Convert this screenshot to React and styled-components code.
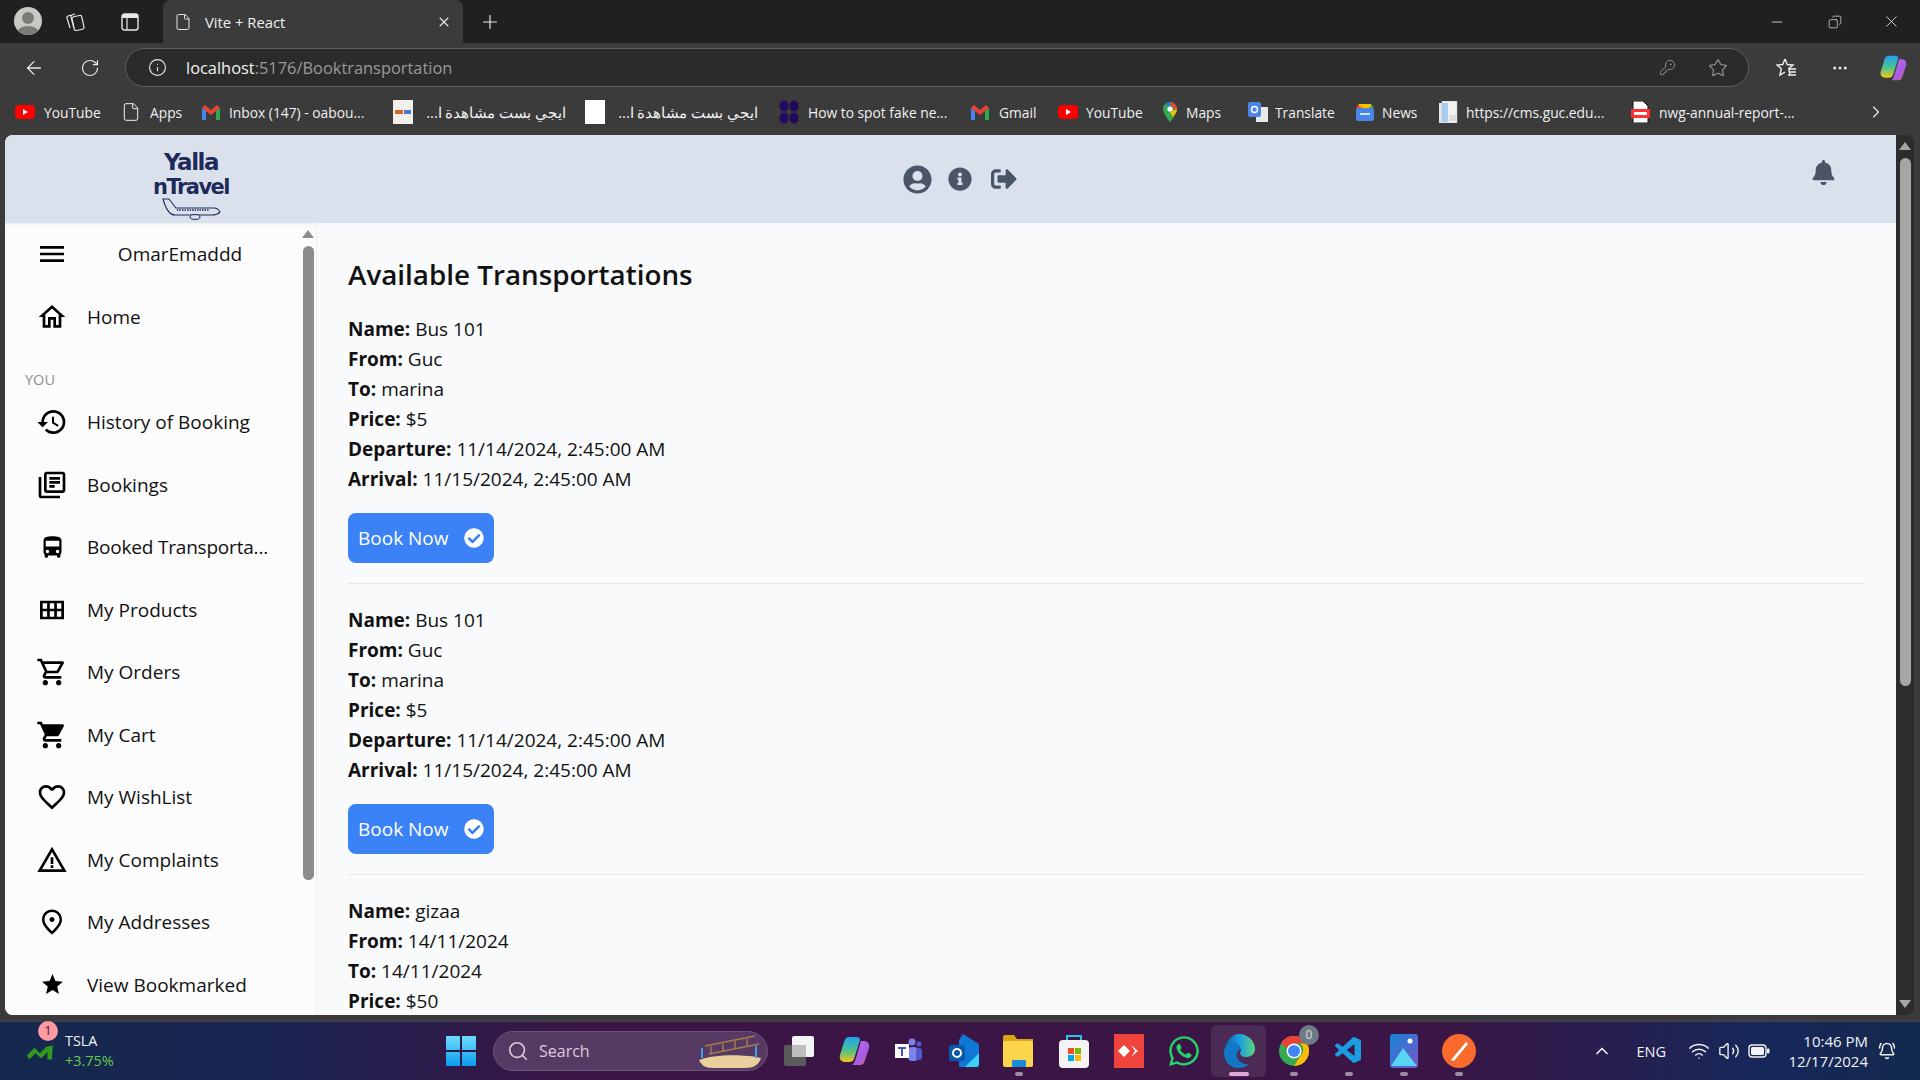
import React from 'react'
import styled, { createGlobalStyle } from 'styled-components'
import {
  ArrowLeft, RotateCw, Info, KeyRound, Star, ChevronRight, ChevronUp, File, X, Plus, Minus, Copy,
  MoreHorizontal, Wifi, Volume2, Search, BellRing,
} from 'lucide-react'
import {
  MdMenu, MdOutlineHome, MdHistory, MdOutlineLibraryBooks, MdDirectionsBus, MdOutlineViewModule,
  MdOutlineShoppingCart, MdShoppingCart, MdFavoriteBorder, MdWarningAmber, MdOutlinePlace, MdStar,
} from 'react-icons/md'
import { FaUserCircle, FaInfoCircle, FaSignOutAlt, FaBell, FaCheckCircle, FaWhatsapp } from 'react-icons/fa'
import { VscVscode } from 'react-icons/vsc'

const FONT = '"Open Sans", "Noto Sans", sans-serif'

const GlobalStyle = createGlobalStyle`
  html, body { margin: 0; padding: 0; background: #3b3b3b; overflow: hidden; }
  * { box-sizing: border-box; }
`

const Screen = styled.div`
  width: 1920px;
  height: 1080px;
  display: flex;
  flex-direction: column;
  overflow: hidden;
  font-family: ${FONT};
  background: #3b3b3b;
`

/* ---------- browser chrome ---------- */
const TabStrip = styled.div`
  height: 43px;
  flex: none;
  background: #202020;
  display: flex;
  align-items: stretch;
  color: #e8e8e8;
  padding-left: 14px;
`
const Avatar = styled.div`
  width: 28px;
  height: 28px;
  margin-top: 7px;
  border-radius: 50%;
  background: #c9c8c4;
  overflow: hidden;
  flex: none;
`
const StripIcon = styled.div`
  width: ${p => p.$w}px;
  display: flex;
  align-items: center;
  justify-content: center;
  flex: none;
`
const Tab = styled.div`
  width: 300px;
  margin-left: 11px;
  background: #3b3b3b;
  border-radius: 8px 8px 0 0;
  display: flex;
  align-items: center;
  padding: 0 11px 0 11px;
  font-size: 14.8px;
  gap: 13px;
  flex: none;
  span { flex: 1; color: #f0f0f0; }
`
const WindowControls = styled.div`
  margin-left: auto;
  display: flex;
  align-items: center;
  padding-right: 1px;
`
const Toolbar = styled.div`
  height: 47px;
  flex: none;
  display: flex;
  align-items: center;
  padding-top: 2px;
  color: #e8e8e8;
`
const NavButton = styled.div`
  width: ${p => p.$w}px;
  margin-left: ${p => p.$ml || 0}px;
  display: flex;
  justify-content: center;
  flex: none;
`
const UrlBar = styled.div`
  width: 1624px;
  height: 39px;
  flex: none;
  margin-left: 14px;
  border: 1px solid #5e5e5e;
  border-radius: 20px;
  background: #2b2b2b;
  display: flex;
  align-items: center;
  padding: 0 20px 0 22px;
  font-size: 16.4px;
  color: #9a9a9a;
  b { font-weight: 400; color: #f2f2f2; }
`
const UrlText = styled.div`
  margin-left: 19px;
  flex: 1;
`
const Bookmarks = styled.div`
  height: 45px;
  flex: none;
  display: flex;
  align-items: center;
  padding: 0 0 1px 15px;
  color: #f0f0f0;
  font-size: 13.8px;
`
const Bookmark = styled.div`
  width: ${p => p.$w}px;
  flex: none;
  display: flex;
  align-items: center;
  gap: ${p => p.$gap || 9}px;
  white-space: nowrap;
`
const RtlLabel = styled.span`
  direction: rtl;
  width: 140px;
  font-size: 14.5px;
`

/* ---------- page ---------- */
const Viewport = styled.div`
  flex: none;
  height: 886px;
  padding-left: 5px;
  padding-right: 6px;
  display: flex;
`
const Page = styled.div`
  width: 1891px;
  height: 880px;
  display: flex;
  flex-direction: column;
  background: #f9fafb;
  border-radius: 8px 0 0 8px;
  overflow: hidden;
  flex: none;
`
const WindowScroll = styled.div`
  width: 18px;
  height: 880px;
  flex: none;
  background: #2c2c2c;
  border-radius: 0 8px 8px 0;
  display: flex;
  flex-direction: column;
  align-items: center;
  padding: 7px 0;
`
const Arrow = styled.div`
  width: 0;
  height: 0;
  flex: none;
  border-left: 6px solid transparent;
  border-right: 6px solid transparent;
  ${p => p.$down ? `border-top: 8px solid ${p.$c}; margin-top: auto;` : `border-bottom: 8px solid ${p.$c};`}
`
const WindowThumb = styled.div`
  width: 11px;
  height: 528px;
  margin-top: 8px;
  border-radius: 6px;
  background: #a6a6a6;
  flex: none;
`
const Header = styled.header`
  height: 88px;
  flex: none;
  background: #dbe1ec;
  display: flex;
  align-items: center;
`
const Logo = styled.div`
  width: 372px;
  display: flex;
  flex-direction: column;
  align-items: center;
  color: #1f2a5c;
  font-family: "DejaVu Sans", sans-serif;
  font-weight: 700;
  line-height: 25px;
  padding-top: 11px;
  flex: none;
`
const LogoLine = styled.div`
  font-size: ${p => p.$s}px;
  letter-spacing: -1.5px;
  height: ${p => p.$h}px;
`
const HeaderIcons = styled.div`
  width: 1095px;
  padding-left: 526px;
  flex: none;
  display: flex;
  align-items: center;
  gap: 16px;
  color: #4a5568;
  svg:last-child { margin-left: 3px; }
`
const BellWrap = styled.div`
  margin-left: 339px;
  margin-top: -14px;
  color: #4a5568;
  display: flex;
`
const Body = styled.div`
  flex: 1;
  min-height: 0;
  display: flex;
`
const Sidebar = styled.aside`
  width: 312px;
  flex: none;
  display: flex;
  background: #fcfcfc;
  border-right: 1px solid #eeeff1;
  box-shadow: inset 0 6px 6px -6px #e4e6ea;
`
const SideList = styled.nav`
  width: 295px;
  flex: none;
  overflow: hidden;
`
const SideRow = styled.div`
  height: 62.5px;
  display: flex;
  align-items: center;
  padding-left: 31px;
  font-size: 19px;
  color: #111;
  white-space: nowrap;
`
const SideLabel = styled.span`
  letter-spacing: ${p => p.$tight ? '-0.2px' : '0'};
`
const SideIcon = styled.div`
  width: 32px;
  margin-right: 19px;
  display: flex;
  justify-content: center;
  color: #000;
  flex: none;
`
const UserName = styled.div`
  width: 160px;
  margin-left: 13px;
  text-align: center;
`
const SectionLabel = styled.div`
  height: 43px;
  padding: 22px 0 0 20px;
  font-size: 14.5px;
  line-height: 20px;
  color: #8f8f8f;
`
const SideScroll = styled.div`
  width: 16px;
  flex: none;
  display: flex;
  flex-direction: column;
  align-items: center;
  padding-top: 7px;
`
const SideThumb = styled.div`
  width: 11px;
  height: 634px;
  margin-top: 8px;
  border-radius: 6px;
  background: #8c8c8c;
  flex: none;
`
const Main = styled.main`
  flex: 1;
  min-width: 0;
  overflow: hidden;
  padding: 33px 31px 0 31px;
`
const Title = styled.h1`
  margin: 0 0 22px;
  font-size: 27.8px;
  line-height: 36px;
  font-weight: 600;
  color: #111;
`
const Card = styled.section`
  padding-bottom: 20px;
  margin-bottom: 21px;
  border-bottom: 1px solid #e5e7eb;
`
const LastCard = styled.section``
const Line = styled.div`
  height: 30px;
  line-height: 30px;
  font-size: 19px;
  color: #111;
  b { font-weight: 700; }
`
const BookButton = styled.button`
  margin-top: 19px;
  width: 146px;
  height: 50px;
  border: 0;
  border-radius: 8px;
  background: #3b82f6;
  color: #fff;
  font-family: ${FONT};
  font-size: 19px;
  display: flex;
  align-items: center;
  justify-content: space-between;
  padding: 0 10px;
`

/* ---------- taskbar ---------- */
const Taskbar = styled.footer`
  height: 59px;
  flex: none;
  display: flex;
  align-items: center;
  color: #f2f2f2;
  background: linear-gradient(90deg, #14294d 0%, #1a2452 14%, #3a1545 30%, #3a1545 75%, #16285a 92%, #14294d 100%);
  border-top: 1px solid #46405a;
`
const Ticker = styled.div`
  width: 446px;
  flex: none;
  display: flex;
  align-items: center;
  padding-left: 27px;
  position: relative;
`
const TickerBadge = styled.div`
  position: absolute;
  left: 38px;
  top: -10px;
  width: 20px;
  height: 20px;
  border-radius: 50%;
  background: #ff9aa2;
  color: #3a1020;
  font-size: 12px;
  text-align: center;
  line-height: 20px;
`
const TickerText = styled.div`
  margin-left: 10px;
  font-size: 14.4px;
  line-height: 20px;
  em { display: block; font-style: normal; color: #6bc950; }
`
const SearchBox = styled.div`
  width: 275px;
  height: 40px;
  flex: none;
  margin-left: 17px;
  border-radius: 20px;
  background: #573a63;
  border: 1px solid #6b5077;
  display: flex;
  align-items: center;
  padding: 0 6px 0 13px;
  gap: 10px;
  font-size: 16px;
  color: #d8ccdc;
  span { flex: 1; }
`
const TrayApps = styled.div`
  display: flex;
  flex: none;
  margin-left: 3px;
`
const AppSlot = styled.div`
  width: 55px;
  height: 52px;
  display: flex;
  align-items: center;
  justify-content: center;
  position: relative;
  border-radius: 6px;
  background: ${p => p.$active ? '#4b2a55' : 'transparent'};
  &::after {
    content: '';
    display: ${p => p.$dot ? 'block' : 'none'};
    position: absolute;
    bottom: 1px;
    left: 50%;
    transform: translateX(-50%);
    width: ${p => p.$active ? 20 : 8}px;
    height: 4px;
    border-radius: 2px;
    background: ${p => p.$active ? '#e3a8d8' : '#9a8da0'};
  }
`
const AppBadge = styled.div`
  position: absolute;
  right: 2px;
  top: 0;
  width: 20px;
  height: 20px;
  border-radius: 50%;
  background: #6d7b85;
  color: #d8dde0;
  font-size: 12px;
  text-align: center;
  line-height: 20px;
`
const Tray = styled.div`
  margin-left: auto;
  display: flex;
  align-items: center;
  padding-right: 24px;
`
const Lang = styled.div`
  font-size: 14.5px;
  margin: 0 22px 0 24px;
`
const Clock = styled.div`
  width: 98px;
  text-align: right;
  font-size: 15px;
  line-height: 20px;
`

/* ---------- drawn icons ---------- */
const YouTubeIcon = () => (
  <svg width="20" height="14" viewBox="0 0 20 14"><rect width="20" height="14" rx="4" fill="#f00" /><path d="M8 4l5 3-5 3z" fill="#fff" /></svg>
)
const GmailIcon = () => (
  <svg width="18" height="15" viewBox="0 0 18 15">
    <path d="M0 3v12h4V6z" fill="#4285f4" /><path d="M18 3v12h-4V6z" fill="#34a853" />
    <path d="M0 3l3-3 6 5 6-5 3 3-9 7z" fill="#ea4335" />
  </svg>
)
const MapsIcon = () => (
  <svg width="14" height="20" viewBox="0 0 14 20">
    <path d="M7 0a7 7 0 0 1 7 7c0 5-7 13-7 13S0 12 0 7a7 7 0 0 1 7-7z" fill="#34a853" />
    <path d="M2 2a7 7 0 0 1 5-2v4z" fill="#1a73e8" /><path d="M7 0a7 7 0 0 1 7 7H10z" fill="#ea4335" />
    <path d="M14 7c0 2-2 5-4 8L7 10z" fill="#fbbc04" /><circle cx="7" cy="7" r="2.6" fill="#fff" />
  </svg>
)
const TranslateIcon = () => (
  <svg width="20" height="20" viewBox="0 0 20 20">
    <rect x="8" y="5" width="12" height="15" fill="#e8e8e8" /><rect width="13" height="15" rx="2" fill="#4a86e8" />
    <circle cx="6.5" cy="7.5" r="3" fill="none" stroke="#fff" strokeWidth="1.4" />
  </svg>
)
const NewsIcon = () => (
  <svg width="20" height="20" viewBox="0 0 20 20">
    <path d="M4 2h12l2 4H2z" fill="#fbbc04" /><path d="M3 3l4 3H1z" fill="#ea4335" /><path d="M17 3l2 3h-5z" fill="#34a853" />
    <rect x="1" y="6" width="18" height="13" rx="2" fill="#4a86e8" /><rect x="5" y="11" width="10" height="2" fill="#cfe0fb" />
  </svg>
)
const DocIcon = () => (
  <svg width="20" height="22" viewBox="0 0 20 22">
    <rect x="0" y="2" width="8" height="20" fill="#dfe8f2" /><rect x="3" y="0" width="15" height="22" fill="#f2f2f2" stroke="#bbb" strokeWidth=".6" />
    <rect x="3" y="2" width="6" height="19" fill="#a9cbee" /><rect x="10" y="14" width="7" height="6" fill="#ddd" />
  </svg>
)
const PdfIcon = () => (
  <svg width="19" height="22" viewBox="0 0 19 22">
    <path d="M2 0h10l5 5v17H2z" fill="#fff" stroke="#111" strokeWidth="1" />
    <rect x="0" y="8" width="19" height="9" fill="#f33" /><rect x="3" y="11" width="13" height="3" fill="#fff" />
  </svg>
)
const DotsLogo = () => (
  <svg width="20" height="24" viewBox="0 0 20 24" fill="#1f0a5e">
    <ellipse cx="5" cy="6" rx="4.6" ry="5.6" /><ellipse cx="15" cy="6" rx="4.6" ry="5.6" />
    <ellipse cx="5" cy="18" rx="4.6" ry="5.6" /><ellipse cx="15" cy="18" rx="4.6" ry="5.6" />
  </svg>
)
const EgyIcon = () => (
  <svg width="20" height="24" viewBox="0 0 20 24"><rect width="20" height="24" fill="#f1efe9" /><rect x="2" y="10" width="8" height="4" fill="#d8622a" /><rect x="11" y="10" width="7" height="4" fill="#4a78c8" /></svg>
)
const WhiteTile = () => <svg width="20" height="24"><rect width="20" height="24" fill="#fff" /></svg>
const CopilotIcon = ({ size = 32, id = 'cp' }) => (
  <svg width={size} height={size} viewBox="0 0 32 32">
    <defs>
      <linearGradient id={`${id}1`} x1="0" y1="0" x2="0" y2="1"><stop offset="0" stopColor="#1fa2f2" /><stop offset=".55" stopColor="#4cc38a" /><stop offset="1" stopColor="#f5c518" /></linearGradient>
      <linearGradient id={`${id}2`} x1="0" y1="0" x2="1" y2="1"><stop offset="0" stopColor="#c76be0" /><stop offset=".6" stopColor="#a65de8" /><stop offset="1" stopColor="#f0596a" /></linearGradient>
    </defs>
    <path d="M11 2h8c2 0 3 1 3 3l-6 19c-1 2-2 3-5 3H7c-4 0-6-3-5-7l4-13c1-3 2-5 5-5z" fill={`url(#${id}1)`} />
    <path d="M14 30h8c3 0 4-2 5-5l4-12c1-4-1-7-5-7h-3l-6 20c-1 2-2 4-3 4z" fill={`url(#${id}2)`} />
  </svg>
)
const WindowsLogo = () => (
  <svg width="30" height="30" viewBox="0 0 30 30">
    <defs><linearGradient id="win" x1="0" y1="0" x2="0" y2="1"><stop offset="0" stopColor="#6fdcfb" /><stop offset="1" stopColor="#0a9cf0" /></linearGradient></defs>
    <path d="M0 1a1 1 0 0 1 1-1h13v14H0zM16 0h13a1 1 0 0 1 1 1v13H16zM0 16h14v14H1a1 1 0 0 1-1-1zM16 16h14v13a1 1 0 0 1-1 1H16z" fill="url(#win)" />
  </svg>
)
const SearchArt = () => (
  <svg width="62" height="34" viewBox="0 0 62 34">
    <path d="M0 26c14-6 46-6 62-2-2 7-8 10-16 10H14C6 34 2 31 0 26z" fill="#e8cf9b" />
    <path d="M6 12L56 2M10 20L60 10M12 12v8M24 10v8M36 7v8M48 5v8" stroke="#a97c50" strokeWidth="1.4" fill="none" />
    <path d="M3 14v10M57 12v12" stroke="#3f9fe0" strokeWidth="2" />
  </svg>
)
const TaskViewIcon = () => (
  <svg width="30" height="30" viewBox="0 0 30 30">
    <rect y="9" width="22" height="21" rx="2" fill="#5b5b5b" /><rect x="8" y="0" width="22" height="21" rx="2" fill="#f4f4f4" /><rect x="8" y="9" width="14" height="12" fill="#bdbdbd" />
  </svg>
)
const TeamsIcon = () => (
  <svg width="28" height="26" viewBox="0 0 28 26">
    <circle cx="17" cy="4" r="3.5" fill="#7b83eb" /><circle cx="24" cy="6" r="2.6" fill="#5059c9" />
    <rect x="13" y="9" width="10" height="14" rx="4" fill="#7b83eb" /><rect x="21" y="10" width="6" height="12" rx="3" fill="#5059c9" />
    <rect y="6" width="14" height="14" fill="#fff" /><path d="M3 9h8v2H8v7H6v-7H3z" fill="#4b53bc" />
  </svg>
)
const OutlookIcon = () => (
  <svg width="30" height="34" viewBox="0 0 30 34">
    <path d="M14 0l16 10v20a3 3 0 0 1-3 3H10V6z" fill="#0f78d4" /><path d="M16 33l14-14v11a3 3 0 0 1-3 3z" fill="#38d4f5" />
    <rect y="11" width="16" height="16" rx="2" fill="#0a5aab" /><circle cx="8" cy="19" r="4" fill="none" stroke="#fff" strokeWidth="2" />
  </svg>
)
const FolderIcon = () => (
  <svg width="32" height="32" viewBox="0 0 32 32">
    <path d="M0 2a2 2 0 0 1 2-2h9l3 4h16v6H0z" fill="#dba513" /><rect y="6" width="30" height="26" rx="2" fill="#fbd54c" />
    <rect x="9" y="25" width="14" height="7" rx="1" fill="#1b8bd6" />
  </svg>
)
const StoreIcon = () => (
  <svg width="30" height="34" viewBox="0 0 30 34">
    <path d="M8 6V2h14v4" fill="none" stroke="#2dc0ee" strokeWidth="2" /><rect y="6" width="30" height="28" rx="4" fill="#f4f4f4" />
    <rect x="9" y="14" width="6" height="6" fill="#f25022" /><rect x="16" y="14" width="6" height="6" fill="#7fba00" />
    <rect x="9" y="21" width="6" height="6" fill="#00a4ef" /><rect x="16" y="21" width="6" height="6" fill="#ffb900" />
  </svg>
)
const AnyDeskIcon = () => (
  <svg width="30" height="34" viewBox="0 0 30 34">
    <rect width="30" height="34" fill="#ef443b" /><path d="M10 11l6 6-6 6-6-6z" fill="#fff" /><path d="M17 11l7 6-7 6 4-6z" fill="#fff" />
  </svg>
)
const EdgeIcon = () => (
  <svg width="32" height="34" viewBox="0 0 32 34">
    <defs><linearGradient id="edge" x1="0" y1="0" x2="1" y2="0"><stop offset="0" stopColor="#0c59a4" /><stop offset=".5" stopColor="#1b9de2" /><stop offset="1" stopColor="#5ad47a" /></linearGradient></defs>
    <path d="M16 0c9 0 16 7 16 15 0 5-4 8-9 8-4 0-6-2-6-4 0-1 1-2 1-3 0-3-3-5-6-5-6 0-10 5-11 8C2 8 8 0 16 0z" fill="url(#edge)" />
    <path d="M1 19c0-6 5-10 10-10 4 0 7 3 7 6-3 1-5 4-4 8s6 8 12 7c-3 3-7 4-11 4C7 34 1 27 1 19z" fill="#1377c9" />
  </svg>
)
const ChromeIcon = () => (
  <svg width="30" height="30" viewBox="0 0 30 30">
    <circle cx="15" cy="15" r="15" fill="#34a853" /><path d="M15 0a15 15 0 0 1 13 7.5H15a7.5 7.5 0 0 0-7 5L2 7a15 15 0 0 1 13-7z" fill="#ea4335" />
    <path d="M28 7.5A15 15 0 0 1 15 30l7-11a7.5 7.5 0 0 0-1-11.5z" fill="#fbbc04" /><circle cx="15" cy="15" r="7.5" fill="#fff" /><circle cx="15" cy="15" r="6" fill="#4285f4" />
  </svg>
)
const PhotosIcon = () => (
  <svg width="30" height="34" viewBox="0 0 30 34">
    <defs><linearGradient id="ph" x1="0" y1="0" x2="1" y2="1"><stop offset="0" stopColor="#1583d8" /><stop offset="1" stopColor="#7a56c8" /></linearGradient></defs>
    <rect width="28" height="34" x="1" rx="3" fill="url(#ph)" /><circle cx="21" cy="7" r="2.5" fill="#fff" /><path d="M2 32l12-18 14 18z" fill="#58d5f2" />
  </svg>
)
const PenIcon = () => (
  <svg width="34" height="34" viewBox="0 0 34 34">
    <circle cx="17" cy="17" r="17" fill="#f96a2d" /><path d="M9 26L24 8l2 2L12 27z" fill="#fff" />
  </svg>
)
const TickerIcon = () => (
  <svg width="28" height="22" viewBox="0 0 26 20"><path d="M0 14l7-7 5 5 6-6 6-1-1 13h-4v-7l-6 6-5-5-6 6z" fill="#2e9a1f" /></svg>
)
const PlaneIcon = () => (
  <svg width="60" height="22" viewBox="0 0 60 22">
    <path d="M2 1l6 0 7 9h38c3 0 5 2 6 4-2 2-5 3-8 3H14C9 17 5 12 2 1z" fill="#dbe1ec" stroke="#1f2a5c" strokeWidth="1.1" />
    <path d="M16 12h32" stroke="#1f2a5c" strokeWidth="1.6" strokeDasharray="1.5 1" />
    <ellipse cx="34" cy="19" rx="5" ry="2.4" fill="#dbe1ec" stroke="#1f2a5c" />
  </svg>
)
const CollectionsIcon = () => (
  <svg width="20" height="20" viewBox="0 0 20 20" fill="none" stroke="#e8e8e8" strokeWidth="1.2">
    <rect x="8" y="4" width="10" height="14" rx="2" transform="rotate(-12 13 11)" />
    <path d="M6 3l-3 1c-1 .4-1.4 1-1 2l3 10M10 2L7 3c-1 .4-1.4 1-1 2l3 11" />
  </svg>
)
const TabsIcon = () => (
  <svg width="18" height="18" viewBox="0 0 18 18" fill="none">
    <rect x="1" y="1" width="16" height="16" rx="2.5" stroke="#e8e8e8" strokeWidth="1.4" />
    <path d="M1 3.500A2.500 2.500 0 0 1 3.500 1h11A2.500 2.500 0 0 1 17 3.500V5H1z" fill="#e8e8e8" />
    <path d="M6 5v12" stroke="#e8e8e8" strokeWidth="1.2" />
  </svg>
)
const FavoritesIcon = () => (
  <svg width="22" height="22" viewBox="0 0 22 22" fill="none" stroke="#f0f0f0" strokeWidth="1.4">
    <path d="M9 2l2.300 5.500 5.700.5-4.300 3.800 1.300 5.700M9 2L6.700 7.500 1 8l4.300 3.800L4 18l5-3" />
    <path d="M13 12h7M14 15h6M12 18h8" />
  </svg>
)
const BatteryIcon = () => (
  <svg width="22" height="14" viewBox="0 0 22 14">
    <rect x="1" y="1" width="17" height="12" rx="3" fill="none" stroke="#f2f2f2" strokeWidth="1.4" />
    <rect x="3" y="3" width="13" height="8" rx="1.5" fill="#f2f2f2" />
    <rect x="19" y="4.500" width="2.500" height="5" rx="1" fill="#f2f2f2" />
  </svg>
)

const sideItems = [
  [MdHistory, 'History of Booking', 32],
  [MdOutlineLibraryBooks, 'Bookings', 32],
  [MdDirectionsBus, 'Booked Transporta...', 27, true],
  [MdOutlineViewModule, 'My Products', 32],
  [MdOutlineShoppingCart, 'My Orders', 32],
  [MdShoppingCart, 'My Cart', 32],
  [MdFavoriteBorder, 'My WishList', 32],
  [MdWarningAmber, 'My Complaints', 32],
  [MdOutlinePlace, 'My Addresses', 30],
  [MdStar, 'View Bookmarked', 25],
]

const trips = [
  { name: 'Bus 101', from: 'Guc', to: 'marina', price: '$5', dep: '11/14/2024, 2:45:00 AM', arr: '11/15/2024, 2:45:00 AM' },
  { name: 'Bus 101', from: 'Guc', to: 'marina', price: '$5', dep: '11/14/2024, 2:45:00 AM', arr: '11/15/2024, 2:45:00 AM' },
]

const App = () => (
  <Screen>
    <GlobalStyle />
    <TabStrip>
      <Avatar>
        <svg width="28" height="28" viewBox="0 0 28 28" fill="#7c7b78"><circle cx="14" cy="11" r="6" /><ellipse cx="14" cy="26" rx="11" ry="7" /></svg>
      </Avatar>
      <StripIcon $w={66}><CollectionsIcon /></StripIcon>
      <StripIcon $w={44}><TabsIcon /></StripIcon>
      <Tab>
        <File size={18} strokeWidth={1.3} />
        <span>Vite + React</span>
        <X size={16} strokeWidth={1.6} />
      </Tab>
      <StripIcon $w={54}><Plus size={22} strokeWidth={1.3} /></StripIcon>
      <WindowControls>
        <StripIcon $w={60}><Minus size={16} strokeWidth={1.2} /></StripIcon>
        <StripIcon $w={56}><Copy size={14} strokeWidth={1.2} style={{ transform: 'scaleX(-1)' }} /></StripIcon>
        <StripIcon $w={56}><X size={19} strokeWidth={1.1} /></StripIcon>
      </WindowControls>
    </TabStrip>
    <Toolbar>
      <NavButton $w={68}><ArrowLeft size={22} strokeWidth={1.4} /></NavButton>
      <NavButton $w={43}><RotateCw size={20} strokeWidth={1.4} /></NavButton>
      <UrlBar>
        <Info size={19} strokeWidth={1.4} color="#e8e8e8" />
        <UrlText><b>localhost</b>:5176/Booktransportation</UrlText>
        <KeyRound size={17} strokeWidth={1.3} style={{ marginRight: 32 }} />
        <Star size={20} strokeWidth={1.3} />
      </UrlBar>
      <NavButton $w={76}><FavoritesIcon /></NavButton>
      <NavButton $w={29}><MoreHorizontal size={18} /></NavButton>
      <NavButton $w={46} $ml={16}><CopilotIcon size={28} id="cpa" /></NavButton>
    </Toolbar>
    <Bookmarks>
      <Bookmark $w={106}><YouTubeIcon />YouTube</Bookmark>
      <Bookmark $w={81}><File size={20} strokeWidth={1.2} />Apps</Bookmark>
      <Bookmark $w={191}><GmailIcon />Inbox (147) - oabou...</Bookmark>
      <Bookmark $w={192} $gap={13}><EgyIcon /><RtlLabel>ايجي بست مشاهدة ا...</RtlLabel></Bookmark>
      <Bookmark $w={194} $gap={13}><WhiteTile /><RtlLabel>ايجي بست مشاهدة ا...</RtlLabel></Bookmark>
      <Bookmark $w={192}><DotsLogo />How to spot fake ne...</Bookmark>
      <Bookmark $w={87} $gap={10}><GmailIcon />Gmail</Bookmark>
      <Bookmark $w={105} $gap={8}><YouTubeIcon />YouTube</Bookmark>
      <Bookmark $w={85} $gap={9}><MapsIcon />Maps</Bookmark>
      <Bookmark $w={107} $gap={7}><TranslateIcon />Translate</Bookmark>
      <Bookmark $w={84} $gap={7}><NewsIcon />News</Bookmark>
      <Bookmark $w={192} $gap={7}><DocIcon />https://cms.guc.edu...</Bookmark>
      <Bookmark $w={235} $gap={9}><PdfIcon />nwg-annual-report-...</Bookmark>
      <ChevronRight size={20} strokeWidth={1.3} />
    </Bookmarks>
    <Viewport>
      <Page>
        <Header>
          <Logo>
            <LogoLine $s={23} $h={25}>Yalla</LogoLine>
            <LogoLine $s={21} $h={23}>nTravel</LogoLine>
            <PlaneIcon />
          </Logo>
          <HeaderIcons>
            <FaUserCircle size={29} />
            <FaInfoCircle size={24} />
            <FaSignOutAlt size={26} />
          </HeaderIcons>
          <BellWrap><FaBell size={25} /></BellWrap>
        </Header>
        <Body>
          <Sidebar>
            <SideList>
              <SideRow>
                <SideIcon><MdMenu size={32} /></SideIcon>
                <UserName>OmarEmaddd</UserName>
              </SideRow>
              <SideRow><SideIcon><MdOutlineHome size={32} /></SideIcon>Home</SideRow>
              <SectionLabel>YOU</SectionLabel>
              {sideItems.map(([Icon, label, size, tight]) => (
                <SideRow key={label}>
                  <SideIcon><Icon size={size} /></SideIcon>
                  <SideLabel $tight={tight}>{label}</SideLabel>
                </SideRow>
              ))}
            </SideList>
            <SideScroll>
              <Arrow $c="#8c8c8c" />
              <SideThumb />
            </SideScroll>
          </Sidebar>
          <Main>
            <Title>Available Transportations</Title>
            {trips.map((t, i) => (
              <Card key={i}>
                <Line><b>Name:</b> {t.name}</Line>
                <Line><b>From:</b> {t.from}</Line>
                <Line><b>To:</b> {t.to}</Line>
                <Line><b>Price:</b> {t.price}</Line>
                <Line><b>Departure:</b> {t.dep}</Line>
                <Line><b>Arrival:</b> {t.arr}</Line>
                <BookButton>Book Now <FaCheckCircle size={20} /></BookButton>
              </Card>
            ))}
            <LastCard>
              <Line><b>Name:</b> gizaa</Line>
              <Line><b>From:</b> 14/11/2024</Line>
              <Line><b>To:</b> 14/11/2024</Line>
              <Line><b>Price:</b> $50</Line>
            </LastCard>
          </Main>
        </Body>
      </Page>
      <WindowScroll>
        <Arrow $c="#a6a6a6" />
        <WindowThumb />
        <Arrow $down $c="#a6a6a6" />
      </WindowScroll>
    </Viewport>
    <Taskbar>
      <Ticker>
        <TickerIcon />
        <TickerBadge>1</TickerBadge>
        <TickerText>TSLA<em>+3.75%</em></TickerText>
      </Ticker>
      <WindowsLogo />
      <SearchBox>
        <Search size={22} strokeWidth={1.8} />
        <span>Search</span>
        <SearchArt />
      </SearchBox>
      <TrayApps>
        <AppSlot><TaskViewIcon /></AppSlot>
        <AppSlot><CopilotIcon id="cpb" /></AppSlot>
        <AppSlot><TeamsIcon /></AppSlot>
        <AppSlot><OutlookIcon /></AppSlot>
        <AppSlot $dot><FolderIcon /></AppSlot>
        <AppSlot><StoreIcon /></AppSlot>
        <AppSlot><AnyDeskIcon /></AppSlot>
        <AppSlot><FaWhatsapp size={34} color="#25d366" /></AppSlot>
        <AppSlot $active $dot><EdgeIcon /></AppSlot>
        <AppSlot $dot><ChromeIcon /><AppBadge>0</AppBadge></AppSlot>
        <AppSlot $dot><VscVscode size={32} color="#1b9de2" /></AppSlot>
        <AppSlot $dot><PhotosIcon /></AppSlot>
        <AppSlot $dot><PenIcon /></AppSlot>
      </TrayApps>
      <Tray>
        <ChevronUp size={20} strokeWidth={2} />
        <Lang>ENG</Lang>
        <Wifi size={22} strokeWidth={1.7} style={{ marginRight: 8 }} />
        <Volume2 size={22} strokeWidth={1.5} style={{ marginRight: 8 }} />
        <BatteryIcon />
        <Clock>10:46 PM<br />12/17/2024</Clock>
        <BellRing size={18} strokeWidth={2} style={{ marginLeft: 10 }} />
      </Tray>
    </Taskbar>
  </Screen>
)

export default App
